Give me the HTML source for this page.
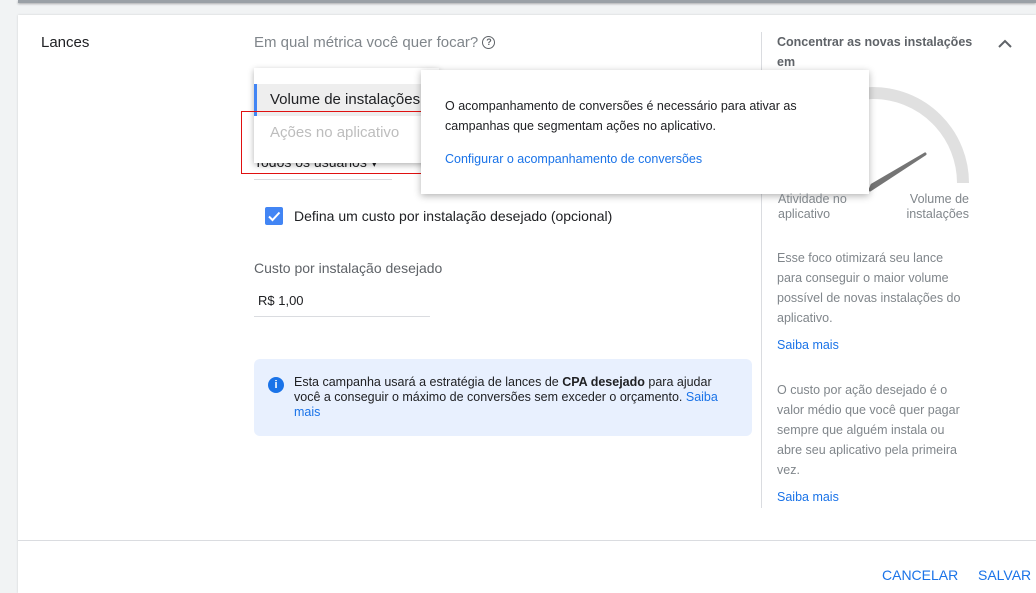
<!DOCTYPE html>
<html><head><meta charset="utf-8"><style>
*{margin:0;padding:0;box-sizing:border-box}
body{width:1036px;height:593px;background:#f1f3f4;font-family:"Liberation Sans",Arial,sans-serif;position:relative;overflow:hidden;color:#3c4043}
.a{position:absolute;white-space:nowrap}
.link{color:#1a73e8}
</style></head><body>
<div class="a" style="left:18px;top:0;width:1018px;height:3px;background:#9aa0a6;box-shadow:0 1px 2px rgba(0,0,0,.3)"></div>
<div class="a" style="left:18px;top:15px;width:1018px;height:578px;background:#fff;box-shadow:0 0 2px rgba(0,0,0,.15)"></div>
<div class="a" style="left:41px;top:34px;font-size:15px;color:#202124">Lances</div>
<div class="a" style="left:254px;top:34px;font-size:15px;color:#80868b">Em qual métrica você quer focar? <span style="display:inline-block;width:13px;height:13px;border:1.5px solid #5f6368;border-radius:50%;font-size:9px;text-align:center;line-height:10px;color:#5f6368;vertical-align:2px;font-weight:bold">?</span></div>
<div class="a" style="left:254px;top:154px;font-size:14px;color:#202124">Todos os usuários ▾</div>
<div class="a" style="left:254px;top:179px;width:138px;height:1px;background:#dadce0"></div>
<div class="a" style="left:254px;top:68px;width:185px;height:95px;background:#fff;box-shadow:0 2px 6px rgba(0,0,0,.3)"></div>
<div class="a" style="left:254px;top:84px;width:185px;height:32px;background:#eeeeee;border-left:3px solid #4285f4"></div>
<div class="a" style="left:270px;top:91px;font-size:15px;color:#202124">Volume de instalações</div>
<div class="a" style="left:270px;top:124px;font-size:15px;color:#bdbdbd">Ações no aplicativo</div>
<div class="a" style="left:241px;top:111px;width:189px;height:63px;border:1px solid #e01010"></div>
<div class="a" style="left:761px;top:32px;width:1px;height:476px;background:#dadce0"></div>
<svg class="a" style="left:760px;top:80px" width="220" height="120"><path d="M23 103 A90 90 0 0 1 203 103" stroke="#e0e0e0" stroke-width="12" fill="none"/><path d="M110 110 L165 74 L112 105 Z" fill="#757575" stroke="#757575" stroke-width="3" stroke-linejoin="round"/></svg>
<div class="a" style="left:421px;top:70px;width:448px;height:124px;background:#fff;box-shadow:0 2px 7px rgba(0,0,0,.3)"></div>
<div class="a" style="left:445px;top:96px;font-size:12.5px;line-height:20px;color:#202124">O acompanhamento de conversões é necessário para ativar as<br>campanhas que segmentam ações no aplicativo.</div>
<div class="a link" style="left:445px;top:152px;font-size:12.5px">Configurar o acompanhamento de conversões</div>
<div class="a" style="left:265px;top:207px;width:18px;height:18px;background:#4285f4;border-radius:2px"><svg width="18" height="18"><path d="M4 9.5l3.5 3.5L14.5 5.5" stroke="#fff" stroke-width="2" fill="none"/></svg></div>
<div class="a" style="left:294px;top:208px;font-size:14px;color:#202124">Defina um custo por instalação desejado (opcional)</div>
<div class="a" style="left:254px;top:260px;font-size:14px;color:#5f6368">Custo por instalação desejado</div>
<div class="a" style="left:258px;top:293px;font-size:13px;color:#202124">R$ 1,00</div>
<div class="a" style="left:254px;top:316px;width:176px;height:1px;background:#dadce0"></div>
<div class="a" style="left:254px;top:359px;width:498px;height:77px;background:#e8f0fe;border-radius:6px"></div>
<div class="a" style="left:268px;top:377px;width:16px;height:16px;border-radius:50%;background:#1a73e8;color:#fff;font-size:11px;font-weight:bold;text-align:center;line-height:16px">i</div>
<div class="a" style="left:294px;top:375px;font-size:12.5px;line-height:15px;color:#202124">Esta campanha usará a estratégia de lances de <b>CPA desejado</b> para ajudar<br>você a conseguir o máximo de conversões sem exceder o orçamento. <span class="link">Saiba</span><br><span class="link">mais</span></div>
<div class="a" style="left:777px;top:32px;font-size:12.5px;line-height:20px;font-weight:bold;color:#5f6368">Concentrar as novas instalações<br>em</div>
<svg class="a" style="left:995px;top:36px" width="20" height="16"><path d="M4 11l6-6 6 6" stroke="#5f6368" stroke-width="2" fill="none"/></svg>
<div class="a" style="left:778px;top:192px;font-size:12.5px;line-height:15px;color:#80868b">Atividade no<br>aplicativo</div>
<div class="a" style="left:899px;top:192px;font-size:12.5px;line-height:15px;color:#80868b;text-align:right;width:70px">Volume de<br>instalações</div>
<div class="a" style="left:777px;top:248px;font-size:12.5px;line-height:20px;color:#80868b">Esse foco otimizará seu lance<br>para conseguir o maior volume<br>possível de novas instalações do<br>aplicativo.</div>
<div class="a link" style="left:777px;top:338px;font-size:12.5px">Saiba mais</div>
<div class="a" style="left:777px;top:380px;font-size:12.5px;line-height:20px;color:#80868b">O custo por ação desejado é o<br>valor médio que você quer pagar<br>sempre que alguém instala ou<br>abre seu aplicativo pela primeira<br>vez.</div>
<div class="a link" style="left:777px;top:490px;font-size:12.5px">Saiba mais</div>
<div class="a" style="left:18px;top:540px;width:1018px;height:1px;background:#dadce0"></div>
<div class="a link" style="left:882px;top:567px;font-size:14px">CANCELAR</div>
<div class="a link" style="left:978px;top:567px;font-size:14px">SALVAR</div>
</body></html>
